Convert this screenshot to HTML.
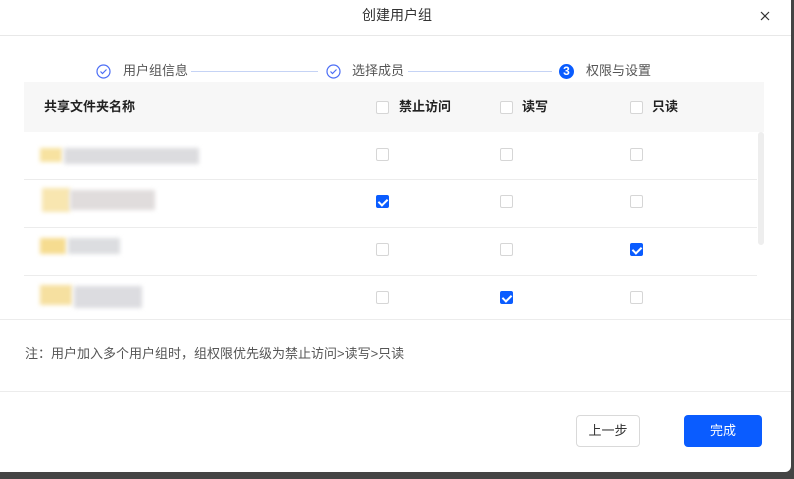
<!DOCTYPE html>
<html><head><meta charset="utf-8"><style>
*{box-sizing:border-box;margin:0;padding:0}
body{width:794px;height:479px;background:#444;font-family:"Liberation Sans","Noto Sans CJK SC",sans-serif;position:relative;overflow:hidden}
.dlg{position:absolute;left:0;top:0;width:791px;height:472px;background:#fff;border-radius:0 0 6px 0}
.abs{position:absolute;line-height:1.2}
.cb{position:absolute;width:13px;height:13px;border:1px solid #d6d6d6;border-radius:2px;background:#fff}
.cb.on{background:#0a5cff;border-color:#0a5cff}
.cb.on:after{content:"";position:absolute;left:3px;top:1px;width:4px;height:7px;border:solid #fff;border-width:0 2px 2px 0;transform:rotate(45deg)}
.line{position:absolute;left:24px;width:733px;height:1px;background:#ececec}
.blur{position:absolute;height:10px;filter:blur(2px)}
</style></head><body>
<div class="dlg">
<div class="abs" style="left:0;width:794px;top:7px;text-align:center;font-size:14px;color:#333">创建用户组</div>
<svg class="abs" style="left:760px;top:11px" width="10" height="10"><path d="M1 1L9 9M9 1L1 9" stroke="#333" stroke-width="1.2"/></svg>
<div class="abs" style="left:0;top:35px;width:791px;height:1px;background:#e8e8e8"></div>

<svg class="abs" style="left:96px;top:64px" width="15" height="15"><circle cx="7.5" cy="7.5" r="6.5" fill="none" stroke="#4c6ef5" stroke-width="1.2"/><path d="M4.5 7.5l2 2 4-4" fill="none" stroke="#4c6ef5" stroke-width="1.2"/></svg>
<div class="abs" style="left:123px;top:63px;font-size:13px;color:#555">用户组信息</div>
<div class="abs" style="left:191px;top:71px;width:127px;height:1px;background:#c5d3f5"></div>
<svg class="abs" style="left:326px;top:64px" width="15" height="15"><circle cx="7.5" cy="7.5" r="6.5" fill="none" stroke="#4c6ef5" stroke-width="1.2"/><path d="M4.5 7.5l2 2 4-4" fill="none" stroke="#4c6ef5" stroke-width="1.2"/></svg>
<div class="abs" style="left:352px;top:63px;font-size:13px;color:#555">选择成员</div>
<div class="abs" style="left:408px;top:71px;width:144px;height:1px;background:#c5d3f5"></div>
<div class="abs" style="left:559px;top:64px;width:15px;height:15px;border-radius:50%;background:#0a5cff;color:#fff;font-size:12px;font-weight:bold;text-align:center;line-height:15px">3</div>
<div class="abs" style="left:586px;top:63px;font-size:13px;color:#555">权限与设置</div>

<div class="abs" style="left:24px;top:82px;width:740px;height:50px;background:#f7f7f7"></div>
<div class="abs" style="left:44px;top:99px;font-size:13px;font-weight:bold;color:#222">共享文件夹名称</div>
<div class="cb" style="left:376px;top:101px"></div><div class="abs" style="left:399px;top:99px;font-size:13px;font-weight:bold;color:#222">禁止访问</div>
<div class="cb" style="left:500px;top:101px"></div><div class="abs" style="left:522px;top:99px;font-size:13px;font-weight:bold;color:#222">读写</div>
<div class="cb" style="left:630px;top:101px"></div><div class="abs" style="left:652px;top:99px;font-size:13px;font-weight:bold;color:#222">只读</div>

<div class="line" style="top:179px"></div>
<div class="line" style="top:227px"></div>
<div class="line" style="top:275px"></div>
<div class="abs" style="left:758px;top:132px;width:6px;height:113px;background:#eee;border-radius:3px"></div>

<div class="blur" style="left:40px;top:148px;width:22px;height:14px;background:#f7e2a0"></div><div class="blur" style="left:64px;top:148px;width:135px;height:16px;background:#dcdcdf"></div>
<div class="blur" style="left:42px;top:188px;width:28px;height:24px;background:#f8e6b0"></div><div class="blur" style="left:70px;top:190px;width:85px;height:20px;background:#e0dcdc"></div>
<div class="blur" style="left:40px;top:238px;width:26px;height:16px;background:#f6dc90"></div><div class="blur" style="left:68px;top:238px;width:52px;height:16px;background:#dcdde0"></div>
<div class="blur" style="left:40px;top:285px;width:32px;height:20px;background:#f6e0a0"></div><div class="blur" style="left:74px;top:286px;width:68px;height:22px;background:#dcdce0"></div>

<div class="cb" style="left:376px;top:148px"></div><div class="cb" style="left:500px;top:148px"></div><div class="cb" style="left:630px;top:148px"></div>
<div class="cb on" style="left:376px;top:195px"></div><div class="cb" style="left:500px;top:195px"></div><div class="cb" style="left:630px;top:195px"></div>
<div class="cb" style="left:376px;top:243px"></div><div class="cb" style="left:500px;top:243px"></div><div class="cb on" style="left:630px;top:243px"></div>
<div class="cb" style="left:376px;top:291px"></div><div class="cb on" style="left:500px;top:291px"></div><div class="cb" style="left:630px;top:291px"></div>

<div class="abs" style="left:0;top:319px;width:791px;height:1px;background:#ececec"></div>
<div class="abs" style="left:25px;top:346px;font-size:13px;color:#555">注：用户加入多个用户组时，组权限优先级为禁止访问&gt;读写&gt;只读</div>
<div class="abs" style="left:0;top:391px;width:791px;height:1px;background:#ececec"></div>

<div class="abs" style="left:576px;top:415px;width:64px;height:32px;border:1px solid #d9d9d9;border-radius:4px;text-align:center;line-height:30px;font-size:13px;color:#333">上一步</div>
<div class="abs" style="left:684px;top:415px;width:78px;height:32px;background:#0a5cff;border-radius:4px;text-align:center;line-height:32px;font-size:13px;color:#fff">完成</div>
</div>
</body></html>
